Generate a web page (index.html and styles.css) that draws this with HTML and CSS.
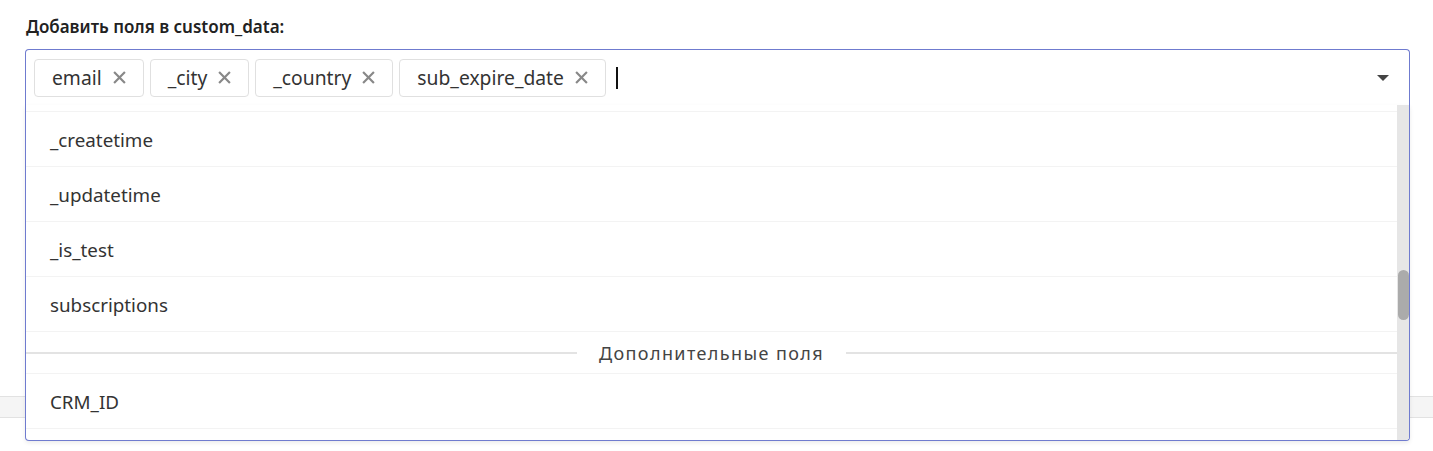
FILE: index.html
```html
<!DOCTYPE html>
<html lang="ru">
<head>
    <meta charset="UTF-8"/>
    <meta name="viewport" content="width=device-width, initial-scale=1.0"/>
    <title>custom_data</title>
    <link rel="stylesheet" href="styles.css">
</head>
<body>
    <div class="field">
        <label class="field-label">Добавить поля в custom_data:</label>

        <div class="select">
            <div class="select-control">
                <div class="tags">
                    <span class="tag">email <svg class="tag-remove" viewBox="0 0 12 12"><path d="M1 1L11 11M11 1L1 11"/></svg></span>
                    <span class="tag">_city <svg class="tag-remove" viewBox="0 0 12 12"><path d="M1 1L11 11M11 1L1 11"/></svg></span>
                    <span class="tag">_country <svg class="tag-remove" viewBox="0 0 12 12"><path d="M1 1L11 11M11 1L1 11"/></svg></span>
                    <span class="tag">sub_expire_date <svg class="tag-remove" viewBox="0 0 12 12"><path d="M1 1L11 11M11 1L1 11"/></svg></span>
                    <span class="cursor"></span>
                </div>
                <span class="caret"></span>
            </div>

            <div class="menu">
                <div class="menu-list">
                    <div class="option option-cut"></div>
                    <div class="option">_createtime</div>
                    <div class="option">_updatetime</div>
                    <div class="option">_is_test</div>
                    <div class="option">subscriptions</div>
                    <div class="group-title"><span>Дополнительные поля</span></div>
                    <div class="option">CRM_ID</div>
                    <div class="option"></div>
                </div>
                <div class="scrollbar">
                    <div class="scrollbar-thumb"></div>
                </div>
            </div>
        </div>
    </div>

    <div class="table-head"></div>
</body>
</html>
```

FILE: styles.css
```css
body {
    margin: 0;
    min-height: 451px;
    font-family: "Noto Sans", "Open Sans", sans-serif;
    color: #333;
    background-color: #fff;
}
.field {
    padding: 14px 23px 0 25px;
}
.field-label {
    display: block;
    font-size: 17px;
    font-weight: 600;
    color: #222;
    line-height: 26px;
    margin-left: 1px;
    margin-bottom: 9px;
}
.select {
    position: relative;
}
.select-control {
    display: flex;
    align-items: center;
    height: 55px;
    border: 1px solid #6f7bcf;
    border-bottom: none;
    border-radius: 4px 4px 0 0;
    padding: 0 20px 0 8px;
}
.tags {
    display: flex;
    align-items: center;
    gap: 6px;
    flex: 1;
}
.tag {
    display: flex;
    align-items: center;
    gap: 11px;
    height: 36px;
    padding: 0 17px;
    border: 1px solid #e0e0e0;
    border-radius: 4px;
    font-size: 19.3px;
    color: #333;
}
.tag-remove {
    width: 13px;
    height: 13px;
    fill: none;
    stroke: #888;
    stroke-width: 2;
}
.cursor {
    width: 2px;
    height: 22px;
    margin-left: 4px;
    background-color: #111;
}
.caret {
    width: 0;
    height: 0;
    border-left: 6px solid transparent;
    border-right: 6px solid transparent;
    border-top: 6px solid #444;
}
.menu {
    position: absolute;
    left: 0;
    right: 0;
    top: 100%;
    height: 335px;
    display: flex;
    border: 1px solid #6f7bcf;
    border-top: none;
    border-radius: 0 0 4px 4px;
    background-color: #fff;
    box-shadow: 0 2px 4px rgba(0, 0, 0, 0.08);
    overflow: hidden;
    z-index: 10;
}
.menu-list {
    flex: 1;
}
.option {
    height: 54px;
    line-height: 56px;
    padding-left: 24px;
    border-bottom: 1px solid #f3f3f3;
    font-size: 18.8px;
    color: #333;
}
.option-cut {
    height: 6px;
}
.group-title {
    display: flex;
    align-items: center;
    gap: 22px;
    height: 41px;
    border-bottom: 1px solid #f3f3f3;
    font-size: 18px;
    letter-spacing: 1.4px;
    color: #444;
}
.group-title::before,
.group-title::after {
    content: "";
    flex: 1;
    height: 2px;
    background-color: #e3e3e3;
}
.scrollbar {
    width: 12px;
    background-color: #e6e6e6;
    padding-top: 165px;
}
.scrollbar-thumb {
    width: 11px;
    height: 50px;
    margin-left: 1px;
    border-radius: 6px;
    background-color: #ababab;
}
.table-head {
    height: 20px;
    margin-top: 291px;
    border-top: 1px solid #e2e2e2;
    border-bottom: 1px solid #e2e2e2;
    background-color: #f5f5f5;
}
```
